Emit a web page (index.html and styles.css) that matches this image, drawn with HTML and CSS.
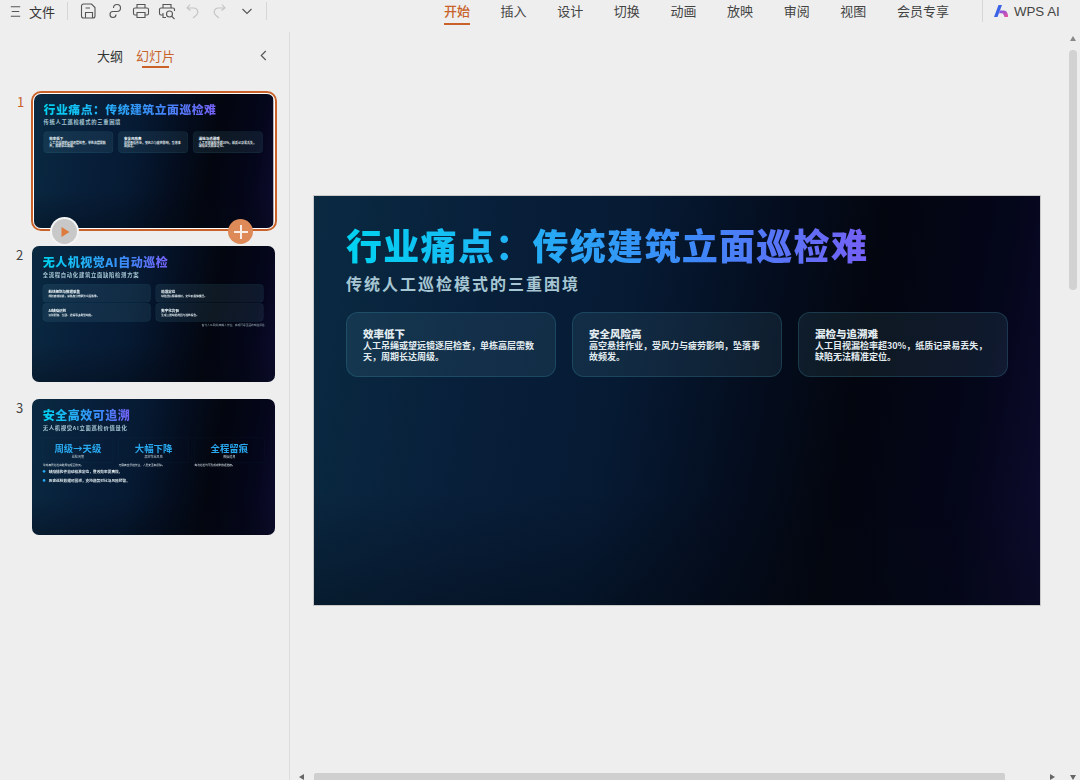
FILE: index.html
```html
<!DOCTYPE html>
<html lang="zh-CN">
<head>
  <meta charset="UTF-8">
  <title>WPS 演示</title>
  <link rel="stylesheet" href="styles.css">
</head>
<body>
  <header class="topbar">
    <div class="tools">
      <svg class="ico menu-ico" viewBox="0 0 16 16"><path d="M3 3h10M4 8h8M3 13h10"/></svg>
      <span class="file">文件</span>
      <i class="sep sep-a"></i>
      <svg class="ico" viewBox="0 0 18 18"><path d="M3.500 2h8l3.500 3.500V14a2 2 0 0 1-2 2H3.500a2 2 0 0 1-2-2V4a2 2 0 0 1 2-2zM5.500 16v-5.500h7V16M5.500 6h4.500"/></svg>
      <svg class="ico" viewBox="0 0 18 18"><path d="M7.500 6a3.500 3.500 0 1 1 3.500 3.500H7a3 3 0 1 0 3 3"/></svg>
      <svg class="ico" viewBox="0 0 18 18"><path d="M5 6V2.500h8V6M5 13H3a1.500 1.500 0 0 1-1.500-1.500V7.500A1.500 1.500 0 0 1 3 6h12a1.500 1.500 0 0 1 1.500 1.500v4A1.500 1.500 0 0 1 15 13h-2M5 10.500h8v5H5z"/></svg>
      <svg class="ico" viewBox="0 0 18 18"><path d="M5 6V2.500h8V6M4.500 13H3a1.500 1.500 0 0 1-1.500-1.500v-4A1.500 1.500 0 0 1 3 6h12a1.500 1.500 0 0 1 1.500 1.500V9M5 11v4.500h3"/><circle cx="11.500" cy="12" r="3"/><path d="M13.800 14.300L16.500 17"/></svg>
      <svg class="ico faded" viewBox="0 0 18 18"><path d="M6 2.500L3 6l3.500 2.500M3.500 6H10a4 4 0 0 1 3.500 5.500c-.8 1.800-2.500 3-4.500 4.500"/></svg>
      <svg class="ico faded" viewBox="0 0 18 18"><path d="M12 2.500L15 6l-3.500 2.500M14.500 6H8a4 4 0 0 0-3.500 5.500c.8 1.800 2.500 3 4.500 4.500"/></svg>
      <svg class="ico more" viewBox="0 0 18 18"><path d="M4.500 7l4.500 4.500L13.500 7"/></svg>
      <i class="sep sep-b"></i>
    </div>
    <nav class="tabs">
      <span class="tab active">开始</span>
      <span class="tab">插入</span>
      <span class="tab">设计</span>
      <span class="tab">切换</span>
      <span class="tab">动画</span>
      <span class="tab">放映</span>
      <span class="tab">审阅</span>
      <span class="tab">视图</span>
      <span class="tab">会员专享</span>
    </nav>
    <div class="ai">
      <svg class="ai-logo" viewBox="0 0 14 12">
        <defs>
          <linearGradient id="aiPink" x1="0" y1="0" x2="1" y2="1"><stop offset="0" stop-color="#7a55e8"/><stop offset="1" stop-color="#f0509a"/></linearGradient>
        </defs>
        <path d="M4.500 0H8L3.500 12H0z" fill="#3c63e6"/>
        <path d="M6 5.500h3.500a4 4 0 0 1 4 3L14.500 12H10.500L9.500 9.500a2 2 0 0 0-2-1.300H5z" fill="url(#aiPink)"/>
      </svg>
      <span>WPS AI</span>
    </div>
  </header>

  <div class="workspace">
    <aside class="sidebar">
      <div class="side-head">
        <span class="side-tab">大纲</span>
        <span class="side-tab on">幻灯片</span>
        <svg class="side-back" viewBox="0 0 10 14"><path d="M7.500 2L2.500 7l5 5"/></svg>
      </div>

      <div class="thumb-row first">
        <span class="num on">1</span>
        <div class="picked">
          <div class="thumb small">
            <div class="slide">
              <h1 class="s-title">行业痛点：传统建筑立面巡检难</h1>
              <h2 class="s-sub">传统人工巡检模式的三重困境</h2>
              <div class="cards">
                <div class="card"><b>效率低下</b>人工吊绳或望远镜逐层检查，单栋高层需数天，周期长达周级。</div>
                <div class="card"><b>安全风险高</b>高空悬挂作业，受风力与疲劳影响，坠落事故频发。</div>
                <div class="card"><b>漏检与追溯难</b>人工目视漏检率超30%，纸质记录易丢失，缺陷无法精准定位。</div>
              </div>
            </div>
          </div>
          <span class="round play"><svg viewBox="0 0 12 12"><path d="M2.500 1l8 5-8 5z"/></svg></span>
          <span class="round plus"></span>
        </div>
      </div>

      <div class="thumb-row second">
        <span class="num">2</span>
        <div class="thumb">
          <div class="slide">
            <h1 class="s-title">无人机视觉AI自动巡检</h1>
            <h2 class="s-sub">全流程自动化建筑立面缺陷检测方案</h2>
            <div class="cards two">
              <div class="card"><b>航线规划与数据采集</b>规划高效航线，采集高分辨率外立面影像。</div>
              <div class="card"><b>精准定位</b>缺陷坐标精确映射，定位到具体楼层。</div>
              <div class="card"><b>AI缺陷识别</b>识别裂缝、空鼓、渗漏等多类型缺陷。</div>
              <div class="card"><b>数字化台账</b>生成三维缺陷地图与巡检报告。</div>
            </div>
            <p class="s-note">替代人工吊绳/蜘蛛人作业，实现可靠全面的缺陷评估</p>
          </div>
        </div>
      </div>

      <div class="thumb-row third">
        <span class="num">3</span>
        <div class="thumb">
          <div class="slide">
            <h1 class="s-title">安全高效可追溯</h1>
            <h2 class="s-sub">无人机视觉AI立面巡检价值量化</h2>
            <div class="stats">
              <div class="stat"><strong>周级→天级</strong><small>巡检周期</small><em>单栋高层巡检由数周缩短至数天。</em></div>
              <div class="stat"><strong>大幅下降</strong><small>高空作业风险</small><em>无需高空悬挂作业，人员安全有保障。</em></div>
              <div class="stat"><strong>全程留痕</strong><small>数据追溯</small><em>每次巡检均可形成完整数据档案。</em></div>
            </div>
            <ul class="points">
              <li>缺陷结构件自动精准定位，整改效率更高效。</li>
              <li>历史巡检数据可回溯，支持趋势对比与风险预警。</li>
            </ul>
          </div>
        </div>
      </div>
    </aside>

    <main class="stage">
      <div class="slide">
        <h1 class="s-title">行业痛点：传统建筑立面巡检难</h1>
        <h2 class="s-sub">传统人工巡检模式的三重困境</h2>
        <div class="cards">
          <div class="card"><b>效率低下</b>人工吊绳或望远镜逐层检查，单栋高层需数天，周期长达周级。</div>
          <div class="card"><b>安全风险高</b>高空悬挂作业，受风力与疲劳影响，坠落事故频发。</div>
          <div class="card"><b>漏检与追溯难</b>人工目视漏检率超30%，纸质记录易丢失，缺陷无法精准定位。</div>
        </div>
      </div>

      <div class="vbar"><i class="arrow up"></i><i class="vthumb"></i><i class="arrow down"></i></div>
      <div class="hbar"><i class="arrow left"></i><i class="hthumb"></i><i class="arrow right"></i></div>
    </main>
  </div>
</body>
</html>
```

FILE: styles.css
```css
* {
  box-sizing: border-box;
}

body {
  margin: 0;
  width: 1080px;
  height: 780px;
  overflow: hidden;
  background: #eeeeee;
  color: #333;
  font-family: "Noto Sans CJK SC", "Noto Sans", sans-serif;
}

/* top bar */
.topbar {
  height: 32px;
  display: flex;
  align-items: flex-start;
}

.tools {
  width: 444px;
  height: 22px;
  display: flex;
  align-items: center;
  padding-left: 8px;
}

.ico {
  width: 18px;
  height: 18px;
  margin-right: 8px;
  fill: none;
  stroke: #555;
  stroke-width: 1.100;
  flex: none;
}

.menu-ico {
  width: 15px;
  height: 15px;
  margin-right: 6px;
}

.ico.faded {
  stroke: #c4c4c4;
}

.ico.more {
  margin-left: 2px;
  margin-right: 0;
}

.file {
  font-size: 13px;
  width: 26px;
}

.sep {
  width: 1px;
  height: 18px;
  background: #d6d6d6;
  flex: none;
}

.sep-a {
  margin: 0 12px 0 12px;
}

.sep-b {
  margin-left: 10px;
}

.tabs {
  display: flex;
  gap: 30.600px;
}

.tab {
  height: 25px;
  font-size: 13px;
  line-height: 22px;
  color: #444;
}

.tab.active {
  color: #c8622a;
  font-weight: 500;
  border-bottom: 2px solid #c8622a;
}

.ai {
  margin-left: 33px;
  height: 22px;
  display: flex;
  align-items: center;
  padding-left: 11px;
  border-left: 1px solid #d6d6d6;
  font-family: "Liberation Sans", sans-serif;
  font-size: 13.300px;
  color: #444;
}

.ai-logo {
  width: 14px;
  height: 12px;
  margin-right: 6px;
}

/* sidebar */
.workspace {
  display: flex;
  height: 748px;
}

.sidebar {
  width: 290px;
  flex: none;
  border-right: 1px solid #dcdcdc;
}

.side-head {
  height: 48px;
  display: flex;
  align-items: flex-start;
  padding: 13px 0 0 97px;
  gap: 13px;
  position: relative;
}

.side-tab {
  font-size: 13px;
  line-height: 22px;
  height: 23px;
}

.side-tab.on {
  color: #c8622a;
  position: relative;
}

.side-tab.on::after {
  content: "";
  position: absolute;
  left: 6px;
  right: 6px;
  bottom: 0;
  height: 2px;
  background: #c8622a;
}

.side-back {
  position: absolute;
  left: 259px;
  top: 17px;
  width: 9px;
  height: 13px;
  fill: none;
  stroke: #555;
  stroke-width: 1.300;
}

.thumb-row {
  display: flex;
  padding-left: 32px;
  position: relative;
}

.thumb-row.first {
  padding-left: 31px;
  margin-top: 11px;
}

.thumb-row.second {
  margin-top: 15px;
}

.thumb-row.third {
  margin-top: 17px;
}

.num {
  position: absolute;
  left: 16px;
  top: 1px;
  font-size: 13px;
  line-height: 16px;
  color: #444;
}

.num.on {
  left: 17px;
  top: 3px;
  color: #c8622a;
}

.picked {
  position: relative;
  width: 246px;
  height: 140px;
  padding: 1px;
  border: 2px solid #c8622a;
  border-radius: 10px;
  background: #fff;
}

.thumb {
  width: 243px;
  height: 136px;
  border-radius: 7px;
  overflow: hidden;
}

.thumb.small {
  width: 240px;
  height: 134px;
}

.thumb .slide {
  transform: scale(0.335);
  transform-origin: 0 0;
  outline: 0;
}

.thumb.small .slide {
  transform: translate(-1px, -1px) scale(0.331);
}

.round {
  position: absolute;
  top: 126px;
  width: 25px;
  height: 25px;
  border-radius: 50%;
  display: flex;
  align-items: center;
  justify-content: center;
}

.play {
  left: 19px;
  background: #c8c8c8;
  box-shadow: 0 0 0 2px #f4f4f4;
}

.play svg {
  width: 12px;
  height: 12px;
  fill: #dd7a3c;
}

.plus {
  left: 195px;
  background: #dd8a58;
}

.plus::before,
.plus::after {
  content: "";
  position: absolute;
  background: #fbeee6;
}

.plus::before {
  width: 14px;
  height: 2px;
  left: 5.500px;
  top: 11.500px;
}

.plus::after {
  width: 2px;
  height: 14px;
  left: 11.500px;
  top: 5.500px;
}

/* main stage */
.stage {
  flex: 1;
  position: relative;
  padding: 164px 0 0 24px;
}

.slide {
  width: 726px;
  height: 409px;
  padding: 25px 32px 0;
  overflow: hidden;
  outline: 1px solid #c9c9c9;
  background:
    linear-gradient(to top, rgba(3, 8, 16, 0.35), transparent 28%),
    linear-gradient(100deg, #0a2a42 0%, #081f3a 24%, #061a33 42%, #040e20 58%, #03060f 72%, #04061a 88%, #0e0c30 100%);
}

.s-title {
  margin: 0;
  display: table;
  font-size: 36px;
  line-height: 46px;
  letter-spacing: 1.300px;
  font-weight: 900;
  color: transparent;
  background: linear-gradient(90deg, #00d2f0 0%, #1fb4f5 30%, #3f86f8 68%, #7560f5 100%);
  -webkit-background-clip: text;
  background-clip: text;
}

.s-sub {
  margin: 5px 0 0;
  font-size: 16px;
  line-height: 22px;
  letter-spacing: 2px;
  font-weight: 700;
  color: #a5c6d2;
}

.cards {
  display: grid;
  grid-template-columns: repeat(3, 210px);
  gap: 16px;
  margin-top: 18px;
}

.card {
  height: 65px;
  padding: 14px 16px 0;
  border-radius: 12px;
  border: 1px solid rgba(70, 170, 190, 0.22);
  background: rgba(120, 200, 220, 0.1);
  font-size: 9px;
  line-height: 11px;
  font-weight: 700;
  color: #e2ecf0;
}

.card b {
  display: block;
  font-size: 10.500px;
  line-height: 13px;
}

/* slide 2 */
.cards.two {
  grid-template-columns: repeat(2, 322px);
  gap: 3px 15px;
  margin-top: 16px;
}

.cards.two .card {
  height: 54px;
  padding-top: 14px;
  font-size: 8px;
}

.s-note {
  margin: 5px 0 0;
  text-align: right;
  font-size: 8px;
  line-height: 14px;
  color: #9eb2bd;
}

/* slide 3 */
.stats {
  display: grid;
  grid-template-columns: repeat(3, 210px);
  gap: 16px;
  margin-top: 16px;
  height: 76px;
}

.stat {
  height: 76px;
  padding-top: 14px;
  border-radius: 6px;
  border: 1px solid rgba(70, 170, 190, 0.14);
  text-align: center;
}

.stat strong {
  display: block;
  font-size: 28px;
  line-height: 36px;
  color: #29a9f0;
}

.stat small {
  display: block;
  margin-top: 3px;
  font-size: 9px;
  line-height: 12px;
  color: #c5d5dc;
}

.stat em {
  display: block;
  margin-top: 13px;
  text-align: left;
  font-style: normal;
  font-size: 8px;
  line-height: 10px;
  color: #d5e0e5;
}

.points {
  list-style: none;
  margin: 19px 0 0;
  padding: 0;
  font-size: 11px;
  line-height: 14px;
  font-weight: 700;
  color: #dbe6ea;
}

.points li {
  position: relative;
  padding-left: 18px;
  margin-bottom: 13px;
}

.points li::before {
  content: "";
  position: absolute;
  left: 0;
  top: 3px;
  width: 8px;
  height: 8px;
  border-radius: 50%;
  background: #2aa5ee;
}

/* scrollbars lie over the stage */
.vbar i,
.hbar i {
  position: absolute;
}

.vthumb {
  left: 779px;
  top: 18px;
  width: 8px;
  height: 240px;
  border-radius: 4px;
  background: #d2d2d2;
}

.hthumb {
  left: 24px;
  top: 741px;
  width: 691px;
  height: 7px;
  border-radius: 2px 2px 0 0;
  background: #cfcfcf;
}

.arrow {
  width: 0;
  height: 0;
  border: 3px solid transparent;
}

.arrow.up {
  left: 780px;
  top: 4px;
  border-bottom: 5px solid #888;
  border-top: 0;
}

.arrow.down {
  left: 780px;
  top: 743px;
  border-top: 5px solid #666;
  border-bottom: 0;
}

.arrow.left {
  left: 9px;
  top: 742px;
  border-right: 5px solid #666;
  border-left: 0;
}

.arrow.right {
  left: 760px;
  top: 742px;
  border-left: 5px solid #666;
  border-right: 0;
}
```
